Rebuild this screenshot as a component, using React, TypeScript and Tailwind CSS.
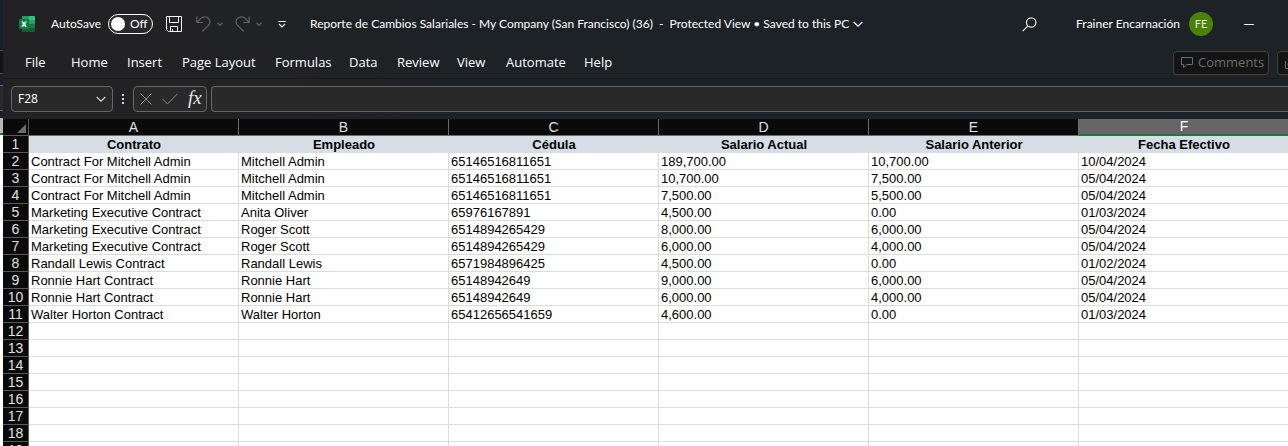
import { useState } from "react";

const COLUMNS = ["A", "B", "C", "D", "E", "F"];

const HEADINGS = ["Contrato", "Empleado", "Cédula", "Salario Actual", "Salario Anterior", "Fecha Efectivo"];

const RECORDS = [
  ["Contract For Mitchell Admin", "Mitchell Admin", "65146516811651", "189,700.00", "10,700.00", "10/04/2024"],
  ["Contract For Mitchell Admin", "Mitchell Admin", "65146516811651", "10,700.00", "7,500.00", "05/04/2024"],
  ["Contract For Mitchell Admin", "Mitchell Admin", "65146516811651", "7,500.00", "5,500.00", "05/04/2024"],
  ["Marketing Executive Contract", "Anita Oliver", "65976167891", "4,500.00", "0.00", "01/03/2024"],
  ["Marketing Executive Contract", "Roger Scott", "6514894265429", "8,000.00", "6,000.00", "05/04/2024"],
  ["Marketing Executive Contract", "Roger Scott", "6514894265429", "6,000.00", "4,000.00", "05/04/2024"],
  ["Randall Lewis Contract", "Randall Lewis", "6571984896425", "4,500.00", "0.00", "01/02/2024"],
  ["Ronnie Hart Contract", "Ronnie Hart", "65148942649", "9,000.00", "6,000.00", "05/04/2024"],
  ["Ronnie Hart Contract", "Ronnie Hart", "65148942649", "6,000.00", "4,000.00", "05/04/2024"],
  ["Walter Horton Contract", "Walter Horton", "65412656541659", "4,600.00", "0.00", "01/03/2024"],
];

const ROW_COUNT = 19;

const TABS = [
  { name: "File", width: "w-[46px]" },
  { name: "Home", width: "w-[56px]" },
  { name: "Insert", width: "w-[55px]" },
  { name: "Page Layout", width: "w-[93px]" },
  { name: "Formulas", width: "w-[74px]" },
  { name: "Data", width: "w-[48px]" },
  { name: "Review", width: "w-[60px]" },
  { name: "View", width: "w-[49px]" },
  { name: "Automate", width: "w-[78px]" },
  { name: "Help", width: "w-[50px]" },
];

function ExcelLogo() {
  return (
    <svg width="16" height="16" viewBox="0 0 16 16" aria-hidden="true">
      <path d="M4 0h6v4H3V1a1 1 0 0 1 1-1z" fill="#21a366" />
      <path d="M10 0h5a1 1 0 0 1 1 1v3h-6z" fill="#33c481" />
      <path d="M3 4h7v4H3z" fill="#107c41" />
      <path d="M10 4h6v4h-6z" fill="#21a366" />
      <path d="M3 8h7v4H3z" fill="#185c37" />
      <path d="M10 8h6v4h-6z" fill="#107c41" />
      <path d="M3 12h13v3a1 1 0 0 1-1 1H4a1 1 0 0 1-1-1z" fill="#185c37" />
      <rect x="0" y="3" width="10" height="10" rx="1" fill="#107c41" />
      <path d="M3 5.5 7.200 10.800M7.200 5.500 3 10.800" stroke="#fff" strokeWidth="1.500" />
    </svg>
  );
}

function SaveIcon() {
  return (
    <svg width="16" height="16" viewBox="0 0 16 16" fill="none" stroke="#f3f3f3" aria-hidden="true">
      <path d="M.5.500h15v15H2.500l-2-2z" />
      <path d="M3.500.500v6h9v-6M4.500 15.500v-5h7v5M6.500 13v2.500" />
    </svg>
  );
}

function UndoIcon() {
  return (
    <svg width="15" height="16" viewBox="0 0 15 16" fill="none" stroke="#626264" strokeWidth="1.200" aria-hidden="true">
      <path d="M.8.500v6h6M1 6.300 4.800 2.400C6.900.400 10.300.300 12.300 2.200c2.200 2 2.200 5.200.2 7.200L6.200 15.500" />
    </svg>
  );
}

function RedoIcon() {
  return (
    <svg width="15" height="16" viewBox="0 0 15 16" fill="none" stroke="#626264" strokeWidth="1.200" aria-hidden="true">
      <path d="M14.200.500v6h-6M14 6.300 10.200 2.400C8.100.400 4.700.300 2.700 2.200c-2.200 2-2.200 5.200-.2 7.200l6.300 6.100" />
    </svg>
  );
}

function Chevron({ size, className }: { size: number; className: string }) {
  return (
    <svg width={size} height={size} viewBox="0 0 10 10" fill="none" stroke="currentColor" strokeWidth={size < 8 ? 2 : 1.2} className={className} aria-hidden="true">
      <path d="m.7 3 4.300 4.200L9.300 3" />
    </svg>
  );
}

function TitleBar() {
  const [autoSave, setAutoSave] = useState(false);
  return (
    <header className="flex h-12 items-center font-[Lato,'Segoe_UI',sans-serif] text-[12px] text-white">
      <div className="flex w-[307px] shrink-0 items-center">
        <span className="ml-4">
          <ExcelLogo />
        </span>
        <span id="autosave" className="ml-4 w-[57px]">AutoSave</span>
        <button
          role="switch"
          aria-checked={autoSave}
          aria-labelledby="autosave"
          onClick={() => setAutoSave(!autoSave)}
          className="flex h-5 w-[45px] items-center gap-[5px] rounded-full border border-white bg-[#292929] pl-0.5"
        >
          <span className="size-3.5 rounded-full bg-white" />
          <span>{autoSave ? "On" : "Off"}</span>
        </button>
        <button aria-label="Save" className="ml-[13px]"><SaveIcon /></button>
        <button aria-label="Undo" className="ml-3.5"><UndoIcon /></button>
        <button aria-label="Undo history" className="ml-1.5"><Chevron size={6} className="text-[#626264]" /></button>
        <button aria-label="Redo" className="ml-3"><RedoIcon /></button>
        <button aria-label="Redo history" className="ml-1.5"><Chevron size={6} className="text-[#626264]" /></button>
        <button aria-label="Customize Quick Access Toolbar" className="ml-4">
          <svg width="8" height="8" viewBox="0 0 8 8" fill="none" stroke="#f3f3f3" strokeWidth="1.200" aria-hidden="true">
            <path d="M0 1.500h8M1 4l3 3 3-3" />
          </svg>
        </button>
      </div>
      <button className="flex items-center gap-1 whitespace-pre">
        <span>Reporte de Cambios Salariales - My Company (San Francisco) (36)  -  Protected View • Saved to this PC</span>
        <Chevron size={10} className="text-white" />
      </button>
      <div className="ml-auto flex items-center">
        <button aria-label="Search">
          <svg width="15" height="15" viewBox="0 0 15 15" fill="none" stroke="#e8e8e8" strokeWidth="1.200" aria-hidden="true">
            <circle cx="9.200" cy="5.500" r="4.700" />
            <path d="M5.900 8.900.7 14.200" />
          </svg>
        </button>
        <button className="ml-[39px] flex items-center gap-[9px]">
          <span>Frainer Encarnación</span>
          <span className="flex size-6 items-center justify-center rounded-full bg-[#498205] text-[11px] text-[#e6efdc]">FE</span>
        </button>
        <button aria-label="Minimize" className="mr-[34px] ml-[31px] h-4 w-2.5">
          <span className="block h-px bg-white" />
        </button>
      </div>
    </header>
  );
}

function RibbonTabs() {
  return (
    <div className="flex h-[31px] items-center border-b border-[#17191b] text-[13px] text-white">
      <nav className="flex pl-[22px]">
        {TABS.map((tab) => (
          <button key={tab.name} className={`${tab.width} shrink-0 text-left whitespace-nowrap`}>
            {tab.name}
          </button>
        ))}
      </nav>
      <button className="ml-auto flex h-6 w-24 shrink-0 items-center gap-1 rounded border border-[#424242] bg-[#141414] pl-[7px] text-[#6b6b6b]">
        <svg width="13" height="12" viewBox="0 0 13 12" fill="none" stroke="currentColor" aria-hidden="true">
          <path d="M.5.500h11v7H5.500l-3 3v-3h-2z" />
        </svg>
        Comments
      </button>
      <div className="ml-2 w-[11px] shrink-0 overflow-hidden">
        <button aria-label="Share" className="flex h-6 w-10 items-center rounded border border-[#424242] bg-[#141414] pl-[7px] text-[#6b6b6b]">
          <svg width="12" height="12" viewBox="0 0 12 12" fill="none" stroke="currentColor" aria-hidden="true">
            <path d="M.5 4v7.500h9V9M3 8c0-3 2-5 5-5" />
          </svg>
        </button>
      </div>
    </div>
  );
}

function FormulaBar() {
  return (
    <div className="flex h-10 items-center pl-2 text-[12px] text-white">
      <div className="flex h-[26px] w-[102px] shrink-0 items-center rounded border border-[#666] bg-[#292929] px-1.5">
        <input aria-label="Name Box" defaultValue="F28" className="w-full min-w-0 bg-transparent outline-none" />
        <button aria-label="Open name list"><Chevron size={10} className="text-[#d6d6d6]" /></button>
      </div>
      <svg width="2" height="10" viewBox="0 0 2 10" fill="#d6d6d6" className="mx-[9px] shrink-0" aria-hidden="true">
        <path d="M0 0h2v2H0zM0 4h2v2H0zM0 8h2v2H0z" />
      </svg>
      <div className="flex h-[26px] w-[74px] shrink-0 items-center rounded border border-[#666] bg-[#292929] pl-1.5">
        <button aria-label="Cancel">
          <svg width="12" height="12" viewBox="0 0 12 12" fill="none" stroke="#8a8a8a" aria-hidden="true">
            <path d="m.5.500 11 11M11.500.500l-11 11" />
          </svg>
        </button>
        <button aria-label="Enter" className="ml-2.5">
          <svg width="16" height="12" viewBox="0 0 16 12" fill="none" stroke="#8a8a8a" aria-hidden="true">
            <path d="m.5 6 5 5L15.500.800" />
          </svg>
        </button>
        <button aria-label="Insert Function" className="ml-2.5 pb-0.5 font-['Liberation_Serif',serif] text-[19px] leading-5 text-[#e6e6e6] italic">
          fx
        </button>
      </div>
      <input aria-label="Formula" className="ml-1 h-[26px] min-w-0 flex-1 rounded-l border border-r-0 border-[#666] bg-[#292929] px-2 outline-none" />
    </div>
  );
}

function Sheet() {
  return (
    <table className="w-max table-fixed border-separate border-spacing-0 bg-white font-['Liberation_Sans',Arial,sans-serif] text-[13px] leading-[15px] text-black">
      <thead>
        <tr className="h-[17px] text-[14px] text-[#e0e0e0]">
          <th aria-label="Select all" className="w-[26px] min-w-[26px] border-r border-b border-[#5a5a5a] bg-[#0a0a0a] p-0">
            <svg width="9" height="9" viewBox="0 0 9 9" className="mt-0.5 ml-3.5" aria-hidden="true">
              <path d="M9 0v9H0z" fill="#6e6e6e" />
            </svg>
          </th>
          {COLUMNS.map((col) => (
            <th
              key={col}
              scope="col"
              className={
                col === "F"
                  ? "w-[210px] min-w-[210px] border-b-2 border-[#217346] bg-[#666] p-0 font-normal text-white"
                  : "w-[210px] min-w-[210px] border-r border-b border-[#6a6a6a] bg-[#0a0a0a] p-0 font-normal"
              }
            >
              {col}
            </th>
          ))}
        </tr>
      </thead>
      <tbody>
        {Array.from({ length: ROW_COUNT }, (_, r) => (
          <tr key={r} className="h-[17px]">
            <th scope="row" className="border-r border-b border-[#5a5a5a] bg-[#0a0a0a] px-0 pt-px pb-0 text-center text-[14px] font-normal text-[#e0e0e0]">
              {r + 1}
            </th>
            {COLUMNS.map((col, c) =>
              r === 0 ? (
                <th key={col} className="border-b border-[#d6dde4] bg-[#d6dde4] px-0 pt-px pb-0 font-bold">
                  {HEADINGS[c]}
                </th>
              ) : (
                <td key={col} className="border-r border-b border-[#dcdcdc] pt-px pr-0 pb-0 pl-0.5">
                  {RECORDS[r - 1]?.[c]}
                </td>
              ),
            )}
          </tr>
        ))}
      </tbody>
    </table>
  );
}

export default function App() {
  return (
    <div className="flex h-screen overflow-hidden bg-[#1a1f24] font-['Open_Sans','Segoe_UI',sans-serif]">
      <div className="flex w-[3px] shrink-0 flex-col" aria-hidden="true">
        <div className="h-[50px] bg-[#17202a]" />
        <div className="h-6 border-y border-[#4a4a4a] bg-[#141414]" />
        <div className="h-[11px] bg-[#17202a]" />
        <div className="h-[26px] border-y border-[#666] bg-[#292929]" />
        <div className="h-[7px] bg-[#17202a]" />
        <div className="h-[17px] border-b-2 border-[#217346] bg-[#b8b8b8]" />
        <div className="flex-1 bg-white" />
      </div>
      <main className="min-w-0 flex-1 overflow-hidden">
        <div className="bg-linear-to-r from-[#222224] from-15% via-[#1d2226] via-35% to-[#1d2226]">
          <TitleBar />
          <RibbonTabs />
          <FormulaBar />
        </div>
        <Sheet />
      </main>
    </div>
  );
}
